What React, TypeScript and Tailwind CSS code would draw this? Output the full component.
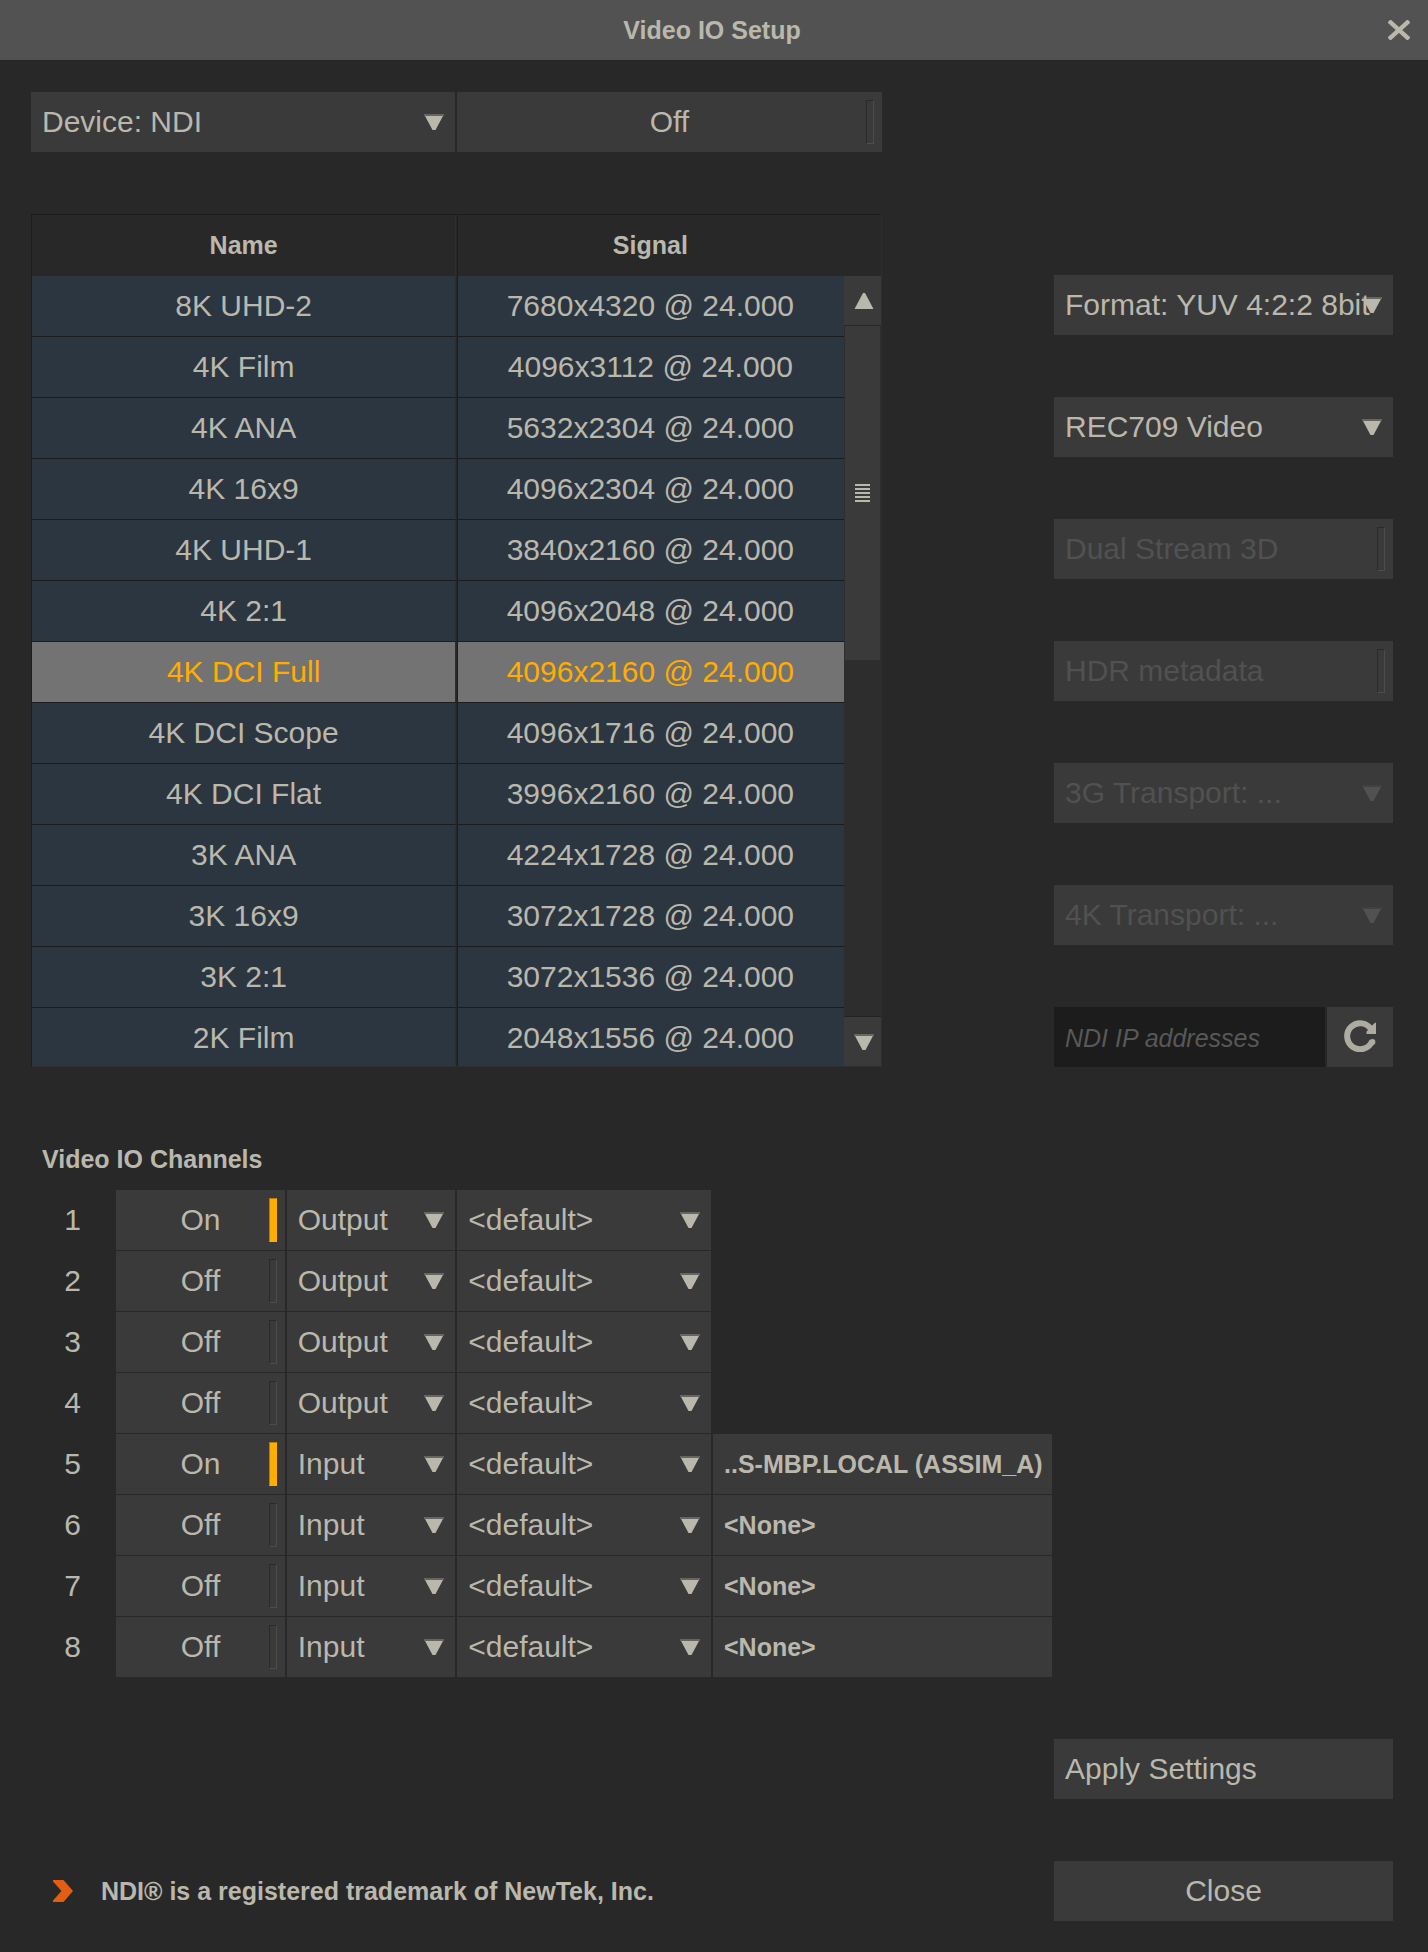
import { useState, type ReactNode } from 'react';

const SIGNALS = [
  ['8K UHD-2', '7680x4320 @ 24.000'],
  ['4K Film', '4096x3112 @ 24.000'],
  ['4K ANA', '5632x2304 @ 24.000'],
  ['4K 16x9', '4096x2304 @ 24.000'],
  ['4K UHD-1', '3840x2160 @ 24.000'],
  ['4K 2:1', '4096x2048 @ 24.000'],
  ['4K DCI Full', '4096x2160 @ 24.000'],
  ['4K DCI Scope', '4096x1716 @ 24.000'],
  ['4K DCI Flat', '3996x2160 @ 24.000'],
  ['3K ANA', '4224x1728 @ 24.000'],
  ['3K 16x9', '3072x1728 @ 24.000'],
  ['3K 2:1', '3072x1536 @ 24.000'],
  ['2K Film', '2048x1556 @ 24.000'],
];

type Channel = { id: number; on: boolean; direction: string; source?: string };

const CHANNELS: Channel[] = [
  { id: 1, on: true, direction: 'Output' },
  { id: 2, on: false, direction: 'Output' },
  { id: 3, on: false, direction: 'Output' },
  { id: 4, on: false, direction: 'Output' },
  { id: 5, on: true, direction: 'Input', source: '..S-MBP.LOCAL (ASSIM_A)' },
  { id: 6, on: false, direction: 'Input', source: '<None>' },
  { id: 7, on: false, direction: 'Input', source: '<None>' },
  { id: 8, on: false, direction: 'Input', source: '<None>' },
];

function ArrowDown({ className = '' }: { className?: string }) {
  return (
    <svg viewBox="0 0 20 18" className={`h-[18px] w-5 ${className}`} fill="currentColor" aria-hidden="true">
      <rect width="20" height="2" opacity="0.35" />
      <path d="M1 2H19L11.5 16H8.5Z" />
    </svg>
  );
}

function ArrowUp() {
  return (
    <svg viewBox="0 0 20 18" className="h-[18px] w-5" fill="currentColor" aria-hidden="true">
      <path d="M0.5 18H19.5L11 2H9Z" />
    </svg>
  );
}

function Dropdown({
  label,
  options,
  disabled = false,
  className = '',
}: {
  label: string;
  options: string[];
  disabled?: boolean;
  className?: string;
}) {
  return (
    <div className={`relative h-[60px] ${disabled ? 'text-[#515151]' : 'text-[#bab8ad]'} ${className}`}>
      <select
        aria-label={label}
        disabled={disabled}
        className="block h-full w-full appearance-none rounded-none bg-[#3a3a3a] pl-[11px] text-[30px] leading-[60px] text-inherit opacity-100 outline-none"
      >
        {options.map((option) => (
          <option key={option}>{option}</option>
        ))}
      </select>
      <ArrowDown className="pointer-events-none absolute top-[22px] right-[11px]" />
    </div>
  );
}

function Toggle({
  label,
  initial = false,
  disabled = false,
  children,
  className = '',
}: {
  label: string;
  initial?: boolean;
  disabled?: boolean;
  children?: ReactNode;
  className?: string;
}) {
  const [on, setOn] = useState(initial);
  return (
    <button
      type="button"
      role="switch"
      aria-checked={on}
      aria-label={label}
      disabled={disabled}
      onClick={() => setOn(!on)}
      className={`relative h-[60px] bg-[#3a3a3a] leading-[60px] ${
        children ? 'pl-[11px] text-left' : 'text-center'
      } ${disabled ? 'text-[#515151]' : ''} ${className}`}
    >
      {children ?? (on ? 'On' : 'Off')}
      <span
        className={`absolute top-2 right-2 h-11 w-2 border ${
          on
            ? 'border-t-[#b57c00] border-r-[#ffae00] border-b-[#ffae00] border-l-[#b57c00] bg-[#ffae00]'
            : 'border-t-[#2a2a2a] border-r-[#4c4c4c] border-b-[#4c4c4c] border-l-[#2a2a2a]'
        }`}
      />
    </button>
  );
}

function ScrollBar() {
  return (
    <div className="absolute top-[61px] right-0 bottom-0 flex w-[37px] flex-col bg-[#2d2d2d]">
      <button
        type="button"
        aria-label="Scroll up"
        className="flex h-[50px] justify-end border-b border-[#282828] bg-[#3a3a3a] pt-[15px] pr-[7px]"
      >
        <ArrowUp />
      </button>
      <div className="mx-px flex h-[334px] flex-col items-center justify-center gap-[2px] bg-[#3a3a3a]">
        {[0, 1, 2, 3, 4].map((line) => (
          <span key={line} className="h-[2px] w-[15px] bg-[#bab8ad]" />
        ))}
      </div>
      <button
        type="button"
        aria-label="Scroll down"
        className="mt-auto flex h-[50px] justify-end border-t border-[#232323] bg-[#3a3a3a] pt-[17px] pr-[7px]"
      >
        <ArrowDown />
      </button>
    </div>
  );
}

function SignalList() {
  const [selected, setSelected] = useState('4K DCI Full');
  return (
    <div className="relative col-span-10 h-[853px] overflow-hidden border border-t-[#1c1c1c] border-r-[#2e2e2e] border-b-[#2e2e2e] border-l-[#1c1c1c]">
      <table className="w-full table-fixed border-separate border-spacing-0 text-center">
        <thead>
          <tr className="h-[61px] text-[25px] leading-[60px]">
            <th className="border-r border-r-[#2e2e2e] p-0 align-top font-bold">Name</th>
            <th className="border-l border-l-[#282828] p-0 pr-[37px] align-top font-bold shadow-[inset_1px_0_0_#1c1c1c]">
              Signal
            </th>
          </tr>
        </thead>
        <tbody>
          {SIGNALS.map(([name, signal]) => (
            <tr
              key={name}
              aria-selected={name === selected}
              onClick={() => setSelected(name)}
              className={name === selected ? 'bg-[#737373] text-[#ffae00]' : 'bg-[#2c3640]'}
            >
              <td className="border-r border-b border-r-[#2e2e2e] border-b-[#1c1c1c] p-0 leading-[60px]">{name}</td>
              <td className="border-b border-l border-b-[#1c1c1c] border-l-[#282828] p-0 pr-[37px] leading-[60px] shadow-[inset_1px_0_0_#1c1c1c]">
                {signal}
              </td>
            </tr>
          ))}
        </tbody>
      </table>
      <ScrollBar />
    </div>
  );
}

function Options() {
  return (
    <div className="col-span-4 col-start-13 flex flex-col gap-[62px] pt-[61px]">
      <Dropdown label="Format" options={['Format: YUV 4:2:2 8bit']} />
      <Dropdown label="Colour space" options={['REC709 Video']} />
      <Toggle label="Dual Stream 3D" disabled>
        Dual Stream 3D
      </Toggle>
      <Toggle label="HDR metadata" disabled>
        HDR metadata
      </Toggle>
      <Dropdown label="3G Transport" options={['3G Transport: ...']} disabled />
      <Dropdown label="4K Transport" options={['4K Transport: ...']} disabled />
      <div className="flex h-[60px] gap-[2px]">
        <input
          type="text"
          aria-label="NDI IP addresses"
          placeholder="NDI IP addresses"
          className="min-w-0 flex-1 bg-[#1c1c1c] pt-1 pl-[11px] text-[25px] italic outline-none placeholder:text-[#585858]"
        />
        <button
          type="button"
          aria-label="Refresh"
          className="flex w-[66px] items-start justify-center bg-[#3a3a3a] pt-[13px] text-[#aeaca1]"
        >
          <svg viewBox="0 0 32 32" className="h-8 w-8" aria-hidden="true">
            <path d="M27.3 9.5A13 13 0 1 0 28.2 21.2" fill="none" stroke="currentColor" strokeWidth="6" />
            <circle cx="28.4" cy="22" r="3" fill="currentColor" />
            <path d="M32 2.5V14H22.5V11.5L27 7L30 3.5Z" fill="currentColor" />
          </svg>
        </button>
      </div>
    </div>
  );
}

function Channels() {
  return (
    <section className="flex flex-col gap-px">
      <h2 className="pl-[11px] text-[25px] leading-[60px] font-bold">Video IO Channels</h2>
      {CHANNELS.map(({ id, on, direction, source }) => (
        <div key={id} className="grid grid-cols-16 gap-x-[2px]">
          <span className="text-center leading-[60px]">{id}</span>
          <Toggle label={`Channel ${id}`} initial={on} className="col-span-2" />
          <Dropdown label={`Channel ${id} direction`} options={[direction]} className="col-span-2" />
          <Dropdown label={`Channel ${id} device`} options={['<default>']} className="col-span-3" />
          {source && (
            <button
              type="button"
              className="col-span-4 h-[60px] bg-[#3a3a3a] pl-[11px] text-left text-[25px] leading-[60px] font-bold whitespace-nowrap"
            >
              {source}
            </button>
          )}
        </div>
      ))}
    </section>
  );
}

export default function App() {
  return (
    <div className="min-h-screen bg-[#282828] font-['Liberation_Sans',Arial,sans-serif] text-[30px] text-[#bab8ad]">
      <header className="relative bg-[#525252] pr-[35px] pl-[31px]">
        <h1 className="text-center text-[25px] leading-[60px] font-bold">Video IO Setup</h1>
        <button type="button" aria-label="Close window" className="absolute top-5 right-[18px]">
          <svg viewBox="0 0 22 20" className="h-5 w-[22px]" fill="none" stroke="currentColor" aria-hidden="true">
            <path d="M1 1L21 19M21 1L1 19" strokeWidth="4.4" />
          </svg>
        </button>
      </header>

      <main className="flex flex-col gap-[62px] pt-8 pr-[35px] pb-[31px] pl-[31px]">
        <div className="grid grid-cols-16 gap-x-[2px]">
          <Dropdown label="Device" options={['Device: NDI']} className="col-span-5" />
          <Toggle label="Device enabled" className="col-span-5" />
        </div>

        <div className="grid grid-cols-16 gap-x-[2px]">
          <SignalList />
          <Options />
        </div>

        <Channels />

        <div className="grid grid-cols-16 gap-x-[2px]">
          <button
            type="button"
            className="col-span-4 col-start-13 bg-[#3a3a3a] pl-[11px] text-left leading-[60px]"
          >
            Apply Settings
          </button>
        </div>

        <footer className="grid grid-cols-16 gap-x-[2px]">
          <p className="col-span-12 flex items-center gap-7 pl-[22px] text-[25px] leading-[60px] font-bold">
            <svg viewBox="0 0 20 22" className="h-[22px] w-5 text-[#e35d12]" fill="currentColor" aria-hidden="true">
              <path d="M0 0H10.5L20 11L10.5 22H0V20.5L8.5 11L0 1.5Z" />
            </svg>
            NDI® is a registered trademark of NewTek, Inc.
          </p>
          <button type="button" className="col-span-4 bg-[#3a3a3a] text-center leading-[60px]">
            Close
          </button>
        </footer>
      </main>
    </div>
  );
}
